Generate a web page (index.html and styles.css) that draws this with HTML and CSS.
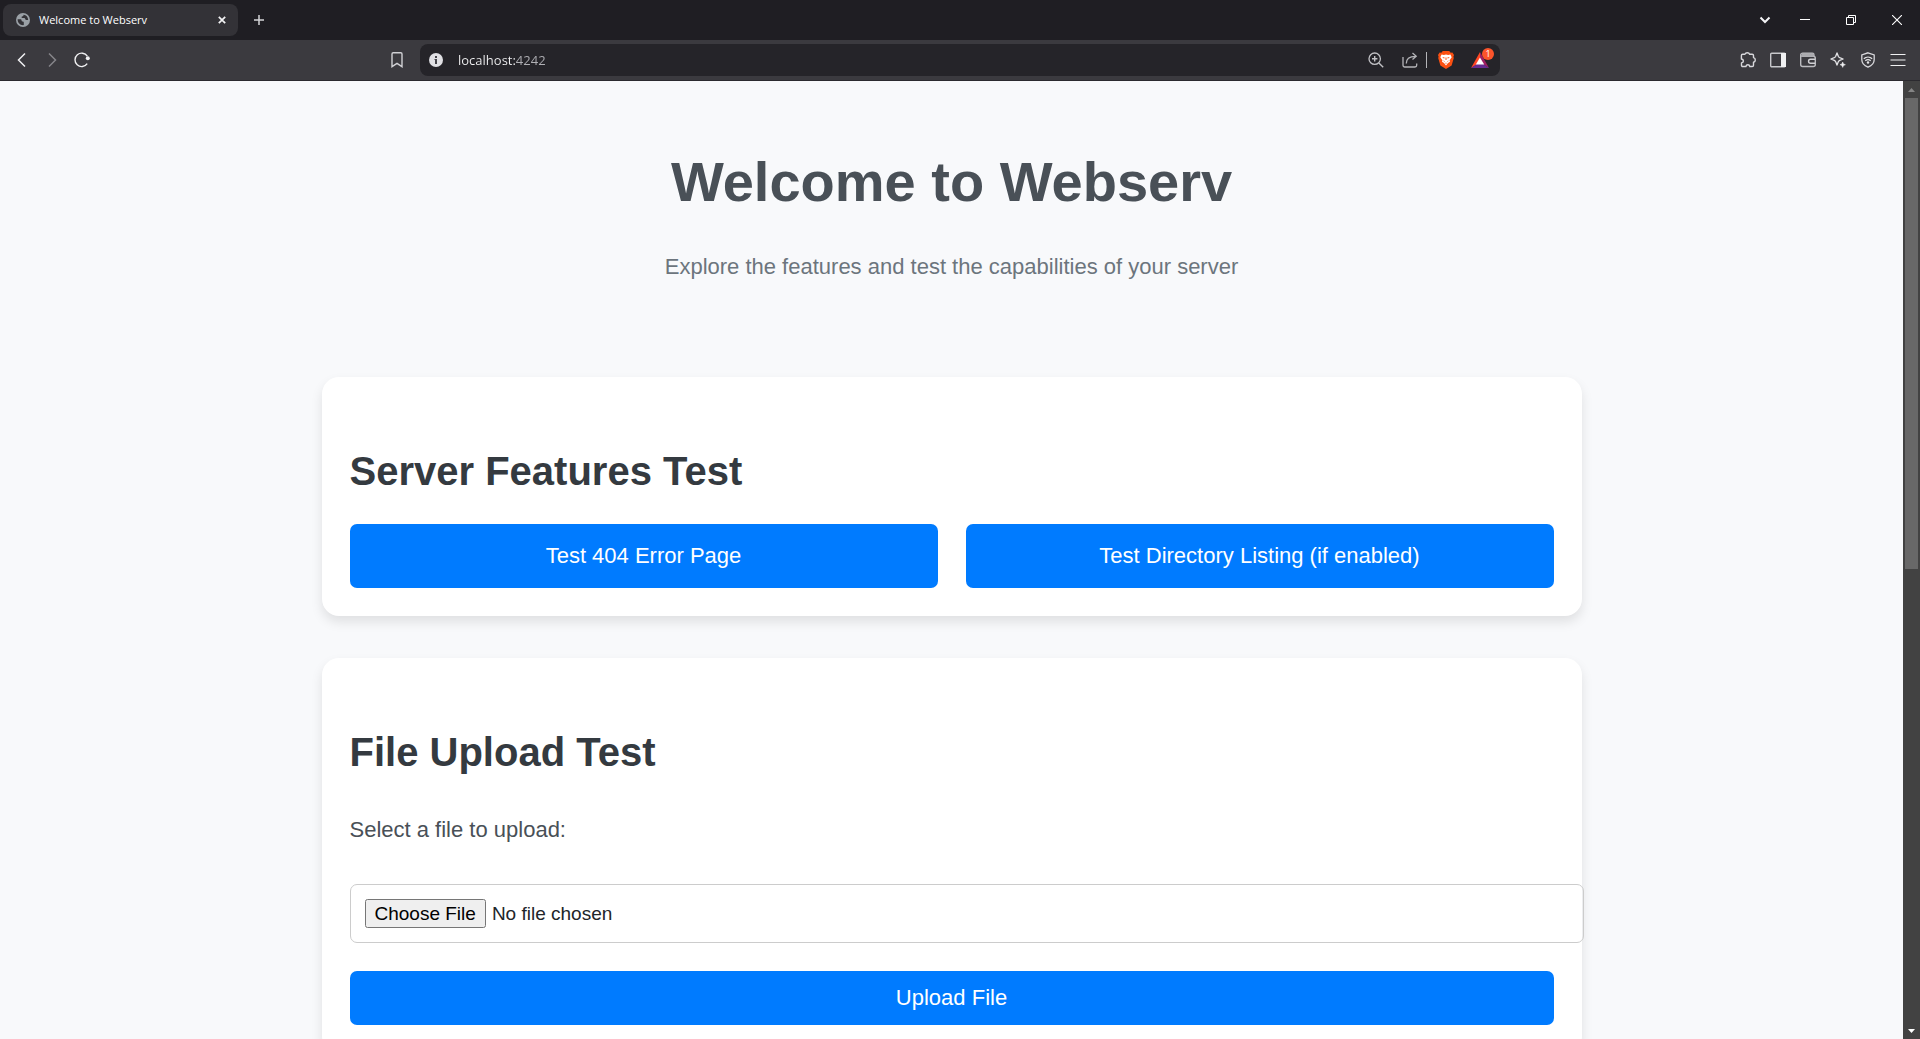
FILE: index.html
```html
<!DOCTYPE html>
<html lang="en">
<head>
<meta charset="utf-8">
<title>Welcome to Webserv</title>
<link rel="stylesheet" href="styles.css">
</head>
<body>
<header class="browser">
  <div class="tabstrip">
    <div class="tab">
      <svg class="icon" width="14" height="14" viewBox="0 0 14 14"><circle cx="7" cy="7" r="7" fill="#9aa0a6"/><path d="M1.6 6.2h2.6c1 0 1.4.5 1.4 1.3 0 .9.5 1 1.3 1 .6 0 .9.4.9 1v2.6c-3.400.4-6.200-2.100-6.200-5.900zM7.600 1.700c-.1 1.200-.7 1.500-1.500 1.700-.7.2-.8.600-.5 1.100.4.600 1.200.6 2.100.5 1 0 1.500.5 1.600 1.200.1.800.9.9 2.900.7-.1-2.900-2-5-4.600-5.200z" fill="#333237"/></svg>
      <span class="tab-title">Welcome to Webserv</span>
      <button class="tab-close" type="button" aria-label="Close tab"><svg class="icon" width="8" height="8" viewBox="0 0 8 8"><path d="M.8.800l6.400 6.400M7.200.800L.8 7.200" stroke="#f2f2f4" stroke-width="1.700"/></svg></button>
    </div>
    <button class="new-tab" type="button" aria-label="New tab"><svg class="icon" width="10" height="10" viewBox="0 0 10 10"><path d="M5 0v10M0 5h10" stroke="#d5d5d8" stroke-width="1.500"/></svg></button>
    <div class="window-controls">
      <button class="window-button tab-search" type="button" aria-label="Search tabs"><svg class="icon" width="12" height="8" viewBox="0 0 12 8"><path d="M1.500 1.500L6 6l4.500-4.500" fill="none" stroke="#f4f4f6" stroke-width="2"/></svg></button>
      <button class="window-button" type="button" aria-label="Minimize"><svg class="icon" width="10" height="10" viewBox="0 0 10 10"><path d="M0 4.500h10" stroke="#fff"/></svg></button>
      <button class="window-button" type="button" aria-label="Restore"><svg class="icon" width="10" height="10" viewBox="0 0 10 10"><path d="M.5 2.500h7v7h-7zM2.500 2.500v-2h7v7h-2" fill="none" stroke="#fff"/></svg></button>
      <button class="window-button" type="button" aria-label="Close"><svg class="icon" width="10" height="10" viewBox="0 0 10 10"><path d="M0 0l10 10M10 0L0 10" stroke="#fff" stroke-width="1.100"/></svg></button>
    </div>
  </div>

  <div class="toolbar">
    <div class="toolbar-start">
      <button class="tool" type="button" aria-label="Back"><svg class="icon" width="16" height="16" viewBox="0 0 16 16"><path d="M11 1.500L4.500 8l6.500 6.500" fill="none" stroke="#f0f0f2" stroke-width="1.500"/></svg></button>
      <button class="tool" type="button" aria-label="Forward"><svg class="icon" width="16" height="16" viewBox="0 0 16 16"><path d="M5 1.500L11.500 8 5 14.500" fill="none" stroke="#85848a" stroke-width="1.500"/></svg></button>
      <button class="tool" type="button" aria-label="Reload"><svg class="icon" width="16" height="16" viewBox="0 0 16 16"><path d="M13.200 11.700A6.700 6.700 0 1 1 13.300 4.200" fill="none" stroke="#f0f0f2" stroke-width="1.400"/><circle cx="13.800" cy="6.300" r="2" fill="#f0f0f2"/></svg></button>
      <button class="tool bookmark" type="button" aria-label="Bookmark"><svg class="icon" width="12" height="16" viewBox="0 0 12 16"><path d="M2.200.800h7.600a1.200 1.200 0 0 1 1.200 1.200v12.700L6 11.300l-5 3.400V2A1.200 1.200 0 0 1 2.200.800z" fill="none" stroke="#d0d0d4" stroke-width="1.400"/></svg></button>
    </div>

    <div class="address">
      <svg class="icon" width="14" height="14" viewBox="0 0 14 14"><circle cx="7" cy="7" r="7" fill="#e0e0e4"/><path d="M6 3h2v2H6zM5.500 6H8v5H6V7h-.5z" fill="#444349"/></svg>
      <input class="url" type="text" value="localhost:4242" aria-label="Address">
      <button class="tool zoom" type="button" aria-label="Zoom"><svg class="icon" width="16" height="16" viewBox="0 0 16 16"><circle cx="6.700" cy="6.700" r="5.700" fill="none" stroke="#c0c0c4" stroke-width="1.300"/><path d="M10.900 10.900l4.300 4.300M6.700 4v5.400M4 6.700h5.400" stroke="#c0c0c4" stroke-width="1.400"/></svg></button>
      <button class="tool share" type="button" aria-label="Share"><svg class="icon" width="16" height="16" viewBox="0 0 16 16"><path d="M1 5v8.300A1.700 1.700 0 0 0 2.700 15H13a1.700 1.700 0 0 0 1.700-1.700v-1.800M4.300 11.500c0-4.600 2.500-7.200 9.500-7.200M10.500 1l3.700 3.300-3.700 3.300" fill="none" stroke="#b4b4b8" stroke-width="1.300"/></svg></button>
      <span class="divider"></span>
      <button class="tool" type="button" aria-label="Shields"><svg class="icon" width="16" height="18" viewBox="0 0 16 18"><path d="M4.800 0h6.400l1.500 1.700 1.700-.1L16 4l-.6 1.700.4 1.300-2.200 7.500L8 18l-5.600-3.500L.2 7l.4-1.300L0 4l1.600-2.400 1.700.1z" fill="#fb5012"/><path d="M3.600 3.500l2.300.4L8 3.400l2.100.5 2.300-.4 1.300 2.800-2.100 2.900.4 1.500-2 1.300L8 14.500l-2-2.500-2-1.300.4-1.500-2.100-2.900z" fill="#fff"/><path d="M4.200 6l2.500.5-.6 1.200zM11.800 6l-2.500.5.6 1.200zM7.500 6.500h1V9h-1zM5.300 9.300l1.400.9-.5.700zM10.700 9.300l-1.400.9.5.7zM6.800 11.400L8 12l1.200-.6L8 12.900z" fill="#fb5012"/></svg></button>
      <button class="tool rewards" type="button" aria-label="Rewards"><svg class="icon" width="18" height="16" viewBox="0 0 18 16"><path d="M9 0L0 16l9-5.600z" fill="#ff4724"/><path d="M9 0l9 16-9-5.600z" fill="#9e1f63"/><path d="M0 16h18l-9-6z" fill="#662d91"/><path d="M9 5.500l4.200 7H4.800z" fill="#fff"/></svg><span class="badge">1</span></button>
    </div>

    <div class="toolbar-end">
      <button class="tool" type="button" aria-label="Extensions"><svg class="icon" width="16" height="16" viewBox="0 0 16 16"><path d="M2.600 2.300h2.300C5.300 1.300 6.300.700 7.300.700s2 .6 2.300 1.600h2.600c.8 0 1.300.5 1.300 1.200v2.100c1.100.3 1.800 1.200 1.800 2.300s-.7 2-1.800 2.300v3c0 .8-.5 1.300-1.300 1.300H9.800c-.2-1-.9-1.700-1.900-1.700s-1.800.7-2 1.700H2.800c-.8 0-1.300-.5-1.300-1.300v-2.300c1.200-.2 1.900-1 1.900-2S2.700 7.200 1.400 7V3.500c0-.7.5-1.200 1.200-1.200z" fill="none" stroke="#d8d8dc" stroke-width="1.400" stroke-linejoin="round"/></svg></button>
      <button class="tool" type="button" aria-label="Sidebar"><svg class="icon" width="16" height="16" viewBox="0 0 16 16"><rect x=".7" y="1.200" width="14.600" height="13.600" rx="1" fill="none" stroke="#c8c8cc" stroke-width="1.400"/><path d="M11 1h5v14h-5z" fill="#f0f0f2"/></svg></button>
      <button class="tool" type="button" aria-label="Wallet"><svg class="icon" width="16" height="16" viewBox="0 0 16 16"><path d="M.7 3.500v9A2 2 0 0 0 2.700 14.500h10.600a2 2 0 0 0 2-2V6.200a2 2 0 0 0-2-2H2.700C1.500 4.200.700 3.700.7 2.900s.8-1.600 2-1.600h9.600c1 0 1.700.7 1.700 1.700v1.500" fill="none" stroke="#bcbcc0" stroke-width="1.400"/><path d="M1.500 1.300h12v3.400H2z" fill="#aaaaae"/><path d="M15 7.300H10.500a1.900 1.900 0 0 0 0 3.900H15" fill="none" stroke="#d0d0d4" stroke-width="1.400"/></svg></button>
      <button class="tool" type="button" aria-label="Leo AI"><svg class="icon" width="16" height="16" viewBox="0 0 16 16"><path d="M7 .900l1.300 3.400c.3.700.7 1.100 1.400 1.400L13.100 7 9.700 8.300c-.7.300-1.100.7-1.400 1.400L7 13.100 5.700 9.700C5.400 9 5 8.600 4.300 8.300L.9 7l3.400-1.300c.7-.3 1.100-.7 1.400-1.400z" fill="none" stroke="#e4e4e7" stroke-width="1.300" stroke-linejoin="round"/><path d="M12.700 10l.8 1.900 1.900.8-1.900.8-.8 1.900-.8-1.900-1.900-.8 1.900-.8z" fill="#f0f0f2" stroke="#f0f0f2" stroke-width=".5"/></svg></button>
      <button class="tool" type="button" aria-label="VPN"><svg class="icon" width="16" height="16" viewBox="0 0 16 16"><path d="M8 .800l6.200 2.200v4.500c0 3.500-2.400 6.200-6.200 7.700C4.200 13.700 1.800 11 1.800 7.500V3z" fill="none" stroke="#d8d8dc" stroke-width="1.300"/><path d="M3.800 6.700c2.400-2 6-2 8.400 0M5.300 8.800c1.600-1.300 3.800-1.300 5.400 0" fill="none" stroke="#e4e4e7" stroke-width="1.300"/><circle cx="8" cy="10.500" r="1.200" fill="#e4e4e7"/></svg></button>
      <button class="tool" type="button" aria-label="Menu"><svg class="icon" width="16" height="16" viewBox="0 0 16 16"><path d="M.5 2.500h15M.5 8h15M.5 13.500h15" stroke="#f0f0f2" stroke-width="1.200"/></svg></button>
    </div>
  </div>
</header>

<div class="viewport">
  <main class="page">
    <header class="hero">
      <h1 class="hero-title">Welcome to Webserv</h1>
      <p class="hero-text">Explore the features and test the capabilities of your server</p>
    </header>

    <section class="card">
      <h2 class="card-title">Server Features Test</h2>
      <div class="links">
        <a class="link-button" href="/404">Test 404 Error Page</a>
        <a class="link-button" href="/listing/">Test Directory Listing (if enabled)</a>
      </div>
    </section>

    <section class="card">
      <h2 class="card-title">File Upload Test</h2>
      <form class="upload">
        <label class="upload-label" for="file">Select a file to upload:</label>
        <input class="upload-file" id="file" name="file" type="file">
        <button class="upload-submit" type="submit">Upload File</button>
      </form>
    </section>
  </main>

  <div class="scrollbar" aria-hidden="true">
    <svg class="arrow" width="17" height="17" viewBox="0 0 17 17"><path d="M5 11l3.500-4 3.500 4z" fill="#858585"/></svg>
    <div class="track"><div class="thumb"></div></div>
    <svg class="arrow" width="17" height="17" viewBox="0 0 17 17"><path d="M5 7l3.500 4L12 7z" fill="#fff"/></svg>
  </div>
</div>
</body>
</html>
```

FILE: styles.css
```css
* {
  box-sizing: border-box;
}

body {
  display: flex;
  flex-direction: column;
  height: 100vh;
  margin: 0;
  overflow: hidden;
  background: #f8f9fb;
  font-family: "Liberation Sans", Arial, sans-serif;
}

button {
  padding: 0;
  border: 0;
  background: none;
  font-family: inherit;
}

.icon,
.arrow {
  display: block;
  flex: none;
}

/* Browser frame */

.browser {
  flex: none;
  font-family: "Open Sans", "Noto Sans", sans-serif;
}

.tabstrip {
  display: flex;
  align-items: center;
  height: 40px;
  padding-left: 3px;
  background: #1f1e23;
}

.tab {
  display: flex;
  align-items: center;
  gap: 9px;
  width: 235px;
  height: 32px;
  padding: 0 8px 0 13px;
  border-radius: 8px;
  background: #333237;
}

.tab-title {
  flex: 1;
  color: #fff;
  font-size: 11px;
  font-weight: 500;
  line-height: 16px;
}

.tab-close,
.new-tab {
  display: grid;
  place-items: center;
  width: 16px;
  height: 16px;
}

.new-tab {
  margin-left: 13px;
}

.window-controls {
  display: flex;
  margin-left: auto;
}

.window-button {
  display: grid;
  place-items: center;
  width: 46px;
  height: 40px;
}

.tab-search {
  width: 34px;
}

.toolbar {
  display: grid;
  grid-template-columns: 1fr minmax(0, 1080px) 1fr;
  align-items: center;
  height: 41px;
  border-bottom: 1px solid #2b2a2f;
  background: #3b3a3f;
}

.toolbar-start,
.toolbar-end {
  display: flex;
  padding: 0 7px;
}

.toolbar-start {
  padding-right: 8px;
}

.toolbar-end {
  justify-content: flex-end;
}

.tool {
  display: grid;
  place-items: center;
  width: 30px;
  height: 32px;
}

.bookmark {
  margin-left: auto;
}

.address {
  display: flex;
  align-items: center;
  height: 32px;
  padding: 0 5px 0 9px;
  border-radius: 8px;
  background: #252429;
}

.url {
  flex: 1;
  min-width: 0;
  height: 32px;
  margin: 0;
  padding: 0 0 0 15px;
  border: 0;
  background: linear-gradient(90deg, #f2f2f4 72px, #b0b0b5 72px) text;
  color: #f2f2f4;
  font: 13px "Open Sans", "Noto Sans", sans-serif;
  -webkit-text-fill-color: transparent;
}

.share {
  margin-left: 4px;
}

.divider {
  width: 1px;
  height: 16px;
  margin: 0 4px 0 1px;
  background: #b4b4b8;
}

.rewards {
  position: relative;
  margin-left: 4px;
}

.badge {
  position: absolute;
  top: 4px;
  right: 1px;
  width: 12px;
  height: 12px;
  border-radius: 6px;
  background: #fb542b;
  color: #fff;
  font-size: 9px;
  line-height: 12px;
}

/* Page */

.viewport {
  display: flex;
  flex: 1;
  min-height: 0;
}

.page {
  display: flex;
  flex: 1;
  flex-direction: column;
  align-items: center;
  gap: 42px;
  min-width: 0;
  overflow: hidden;
}

.hero {
  padding: 56px 28px 50px;
  text-align: center;
}

.hero-title {
  margin: 0 0 22px;
  color: #495057;
  font-size: 56px;
  line-height: 90px;
}

.hero-text {
  margin: 0;
  color: #6c757d;
  font-size: 22px;
  line-height: 36px;
}

.card {
  flex: none;
  width: 100%;
  max-width: 1260px;
  padding: 63px 28px 28px;
  border-radius: 17px;
  background: #fff;
  box-shadow: 0 6px 12px rgba(0, 0, 0, 0.1);
}

.card-title {
  margin: 0 0 21px;
  color: #343a40;
  font-size: 40px;
  line-height: 63px;
}

.links {
  display: grid;
  grid-template-columns: 1fr 1fr;
  gap: 28px;
}

.link-button,
.upload-submit {
  border-radius: 7px;
  background: #007bff;
  color: #fff;
  font-size: 22px;
  text-align: center;
}

.link-button {
  padding: 14px;
  line-height: 36px;
  text-decoration: none;
}

.upload {
  display: flex;
  flex-direction: column;
  gap: 28px;
}

.upload-label {
  padding: 7px 0 8px;
  color: #495057;
  font-size: 22px;
  line-height: 36px;
}

/* The field is wider than the form and runs past the card's edge. */
.upload-file {
  width: calc(100% + 30px);
  padding: 14px;
  border: 1px solid #ccc;
  border-radius: 7px;
  color: #212529;
  font: 19px "Liberation Sans", Arial, sans-serif;
}

.upload-file::file-selector-button {
  height: 29px;
  margin-right: 6px;
  padding: 1px 8px;
  font: inherit;
}

.upload-submit {
  height: 54px;
}

/* Scrollbar */

.scrollbar {
  display: flex;
  flex: none;
  flex-direction: column;
  width: 17px;
  background: #424242;
}

.track {
  flex: 1;
  padding: 0 2px;
}

.thumb {
  height: 51%;
  background: #686868;
}
```
